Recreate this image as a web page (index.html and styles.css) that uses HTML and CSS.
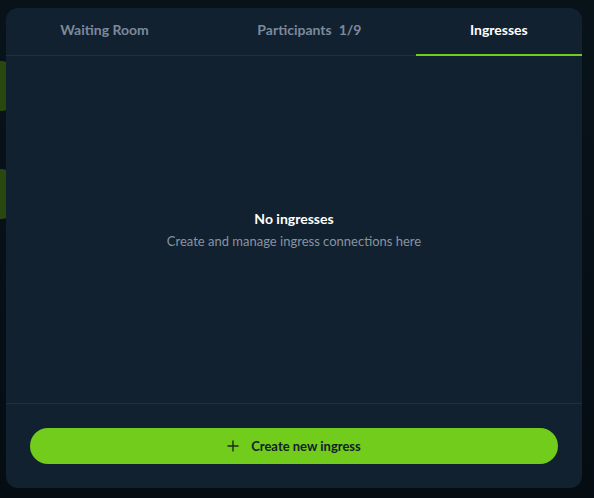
FILE: index.html
```
<!DOCTYPE html>
<html>
<head>
<meta charset="utf-8">
<link rel="stylesheet" href="styles.css">
</head>
<body>
<div class="stage">
  <div class="blob blob-a"></div>
  <div class="blob blob-b"></div>
  <div class="panel">
    <div class="tabs">
      <div class="tab">Waiting Room</div>
      <div class="tab">Participants<span class="count">1/9</span></div>
      <div class="tab active">Ingresses</div>
    </div>
    <div class="empty">
      <div class="empty-title">No ingresses</div>
      <div class="empty-sub">Create and manage ingress connections here</div>
    </div>
    <div class="footer">
      <button class="create">
        <svg width="12" height="12" viewBox="0 0 12 12"><path d="M6 0.5V11.5M0.5 6H11.5" stroke="#1b2a1a" stroke-width="1.4" fill="none"/></svg>
        <span>Create new ingress</span>
      </button>
    </div>
  </div>
</div>
</body>
</html>
```
FILE: styles.css
```
html, body {
  margin: 0;
  padding: 0;
  background: #07121a;
  font-family: Lato, "Noto Sans", sans-serif;
}
.stage {
  position: relative;
  width: 594px;
  height: 498px;
  padding: 8px 12px 10px 6px;
  box-sizing: border-box;
  background: linear-gradient(#081319, #050d13);
}
.blob {
  position: absolute;
  left: -20px;
  width: 30px;
  height: 50px;
  border-radius: 8px;
  background: #29480f;
}
.blob-a { top: 61px; }
.blob-b { top: 169px; }
.panel {
  position: relative;
  height: 100%;
  background: #12212f;
  border-radius: 12px;
  display: flex;
  flex-direction: column;
  overflow: hidden;
}
.tabs {
  display: flex;
  height: 48px;
  border-bottom: 1px solid #1e2f3d;
  box-sizing: border-box;
}
.tab {
  flex: 1 1 auto;
  display: flex;
  align-items: center;
  justify-content: center;
  font-weight: 700;
  font-size: 14px;
  color: #7c8a9b;
  padding-bottom: 4px;
  box-sizing: border-box;
  border-bottom: 2px solid transparent;
  margin-bottom: -1px;
}
.tab .count { margin-left: 7px; }
.tab.active {
  color: #ffffff;
  border-bottom-color: #6fcb1d;
}
.empty {
  flex: 1;
  display: flex;
  flex-direction: column;
  align-items: center;
  justify-content: center;
}
.empty-title {
  color: #ffffff;
  font-weight: 700;
  font-size: 14px;
  margin-bottom: 6px;
}
.empty-sub {
  color: #8794a3;
  font-size: 13px;
}
.footer {
  border-top: 1px solid #1e2f3d;
  padding: 24px;
}
.create {
  width: 100%;
  height: 36px;
  border: none;
  border-radius: 18px;
  background: #71cc1b;
  display: flex;
  align-items: center;
  justify-content: center;
  gap: 12px;
  font-family: Lato, "Noto Sans", sans-serif;
  font-weight: 700;
  font-size: 13px;
  color: #14202a;
  padding: 0;
}
```
